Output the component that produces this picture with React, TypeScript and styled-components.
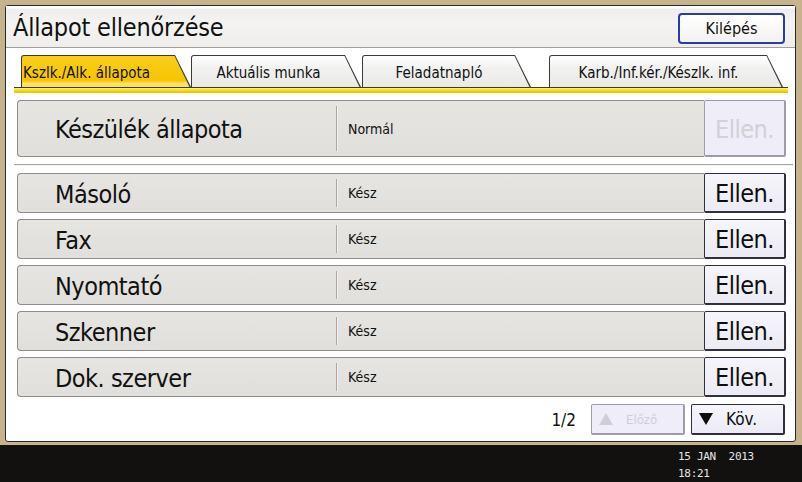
import React from "react";
import styled, { createGlobalStyle } from "styled-components";

const GlobalStyle = createGlobalStyle`
  body {
    margin: 0;
    background: #c6b28d;
    font-family: "Liberation Sans Narrow", "DejaVu Sans Condensed", "DejaVu Sans", sans-serif;
    color: #111;
  }
`;

const Device = styled.div`
  width: 802px;
  height: 482px;
  display: flex;
  flex-direction: column;
  background: #c6b28d;
  overflow: hidden;
`;

const Screen = styled.div`
  margin: 5px 6px 0 5px;
  height: 435px;
  border: 1px solid #2c2a26;
  border-radius: 3px;
  background: #ffffff;
  display: flex;
  flex-direction: column;
`;

const TitleBar = styled.div`
  height: 42px;
  flex-shrink: 0;
  box-sizing: border-box;
  padding: 2px 10px 0 7px;
  border-bottom: 1px solid #a09f9c;
  background: linear-gradient(#ffffff 0, #ffffff 2px, #efeeec 3px, #f4f3f1 40%, #efeeec 100%);
  display: flex;
  align-items: center;
  justify-content: space-between;
`;

const Title = styled.h1`
  margin: 0;
  font-size: 25px;
  font-weight: normal;
  letter-spacing: -0.2px;
`;

const ExitButton = styled.button`
  width: 107px;
  height: 31px;
  margin-top: 1px;
  border: 2px solid #2c3c9e;
  border-radius: 4px;
  background: linear-gradient(#ffffff, #f3f2f0);
  font-family: inherit;
  font-size: 16px;
  color: #111;
  padding: 0;
`;

const TabRow = styled.div`
  display: flex;
  align-items: flex-end;
  margin-top: 7px;
  padding-left: 15px;
  height: 32px;
`;

const Tab = styled.div<{ $width: number; $gapAfter: number }>`
  width: ${(p) => p.$width}px;
  height: 32px;
  margin-right: ${(p) => p.$gapAfter}px;
  box-sizing: border-box;
  padding: 1px 0 0 1px;
  background: #3a3a3a;
  border-top-left-radius: 3px;
  clip-path: polygon(0 0, calc(100% - 16px) 0, 100% 100%, 0 100%);
`;

const TabFace = styled.div<{ $active?: boolean }>`
  height: 100%;
  box-sizing: border-box;
  border-top-left-radius: 2px;
  clip-path: polygon(0 0, calc(100% - 16.5px) 0, calc(100% - 1.5px) 100%, 0 100%);
  background: ${(p) =>
    p.$active
      ? "linear-gradient(#f9cf1c 0, #f6c400 80%, #fde36c 88%, #fbe05a 100%)"
      : "linear-gradient(#ffffff 0, #f1f1ef 40%, #e9e9e7 100%)"};
  display: flex;
  align-items: center;
  justify-content: ${(p) => (p.$active ? "flex-start" : "center")};
  padding: ${(p) => (p.$active ? "2px 0 0 1px" : "2px 16px 0 0")};
  font-size: 15px;
  white-space: nowrap;
`;

const TabBar = styled.div`
  height: 5px;
  margin: 0 7px 0 8px;
  border-top: 1px solid #3a3a3a;
  background: linear-gradient(#fff27a 0, #f3dc1a 45%, #e3c300 100%);
`;

const Content = styled.div`
  display: flex;
  flex-direction: column;
  padding: 7px 9px 0 11px;
`;

const Row = styled.div<{ $tall?: boolean }>`
  display: flex;
  height: ${(p) => (p.$tall ? 57 : 40)}px;
  margin-bottom: 6px;
`;

const Panel = styled.div`
  flex: 1;
  display: flex;
  align-items: center;
  box-sizing: border-box;
  border: 1px solid #8e8d8a;
  border-right: none;
  border-radius: 4px 0 0 4px;
  background: linear-gradient(#e6e5e1, #e0dfdb);
`;

const Label = styled.div`
  width: 281px;
  padding: 2px 0 0 37px;
  font-size: 25px;
  letter-spacing: -0.5px;
  white-space: nowrap;
`;

const Divider = styled.div`
  align-self: stretch;
  width: 1px;
  margin: 5px 0;
  background: #a8a7a3;
  border-right: 1px solid #f3f2ef;
`;

const Status = styled.div`
  padding-left: 10px;
  font-size: 14px;
`;

const CheckButton = styled.button<{ $disabled?: boolean }>`
  width: 82px;
  height: 100%;
  padding: 2px 0 0;
  box-sizing: border-box;
  border: 1px solid ${(p) => (p.$disabled ? "#9d9ca8" : "#2f2f3d")};
  border-right-width: 2px;
  border-bottom-width: 2px;
  border-radius: 2px;
  background: ${(p) => (p.$disabled ? "#efedf7" : "linear-gradient(#f6f5fb, #ecebf5)")};
  color: ${(p) => (p.$disabled ? "#d2d1d6" : "#0e0e0e")};
  font-family: inherit;
  font-size: 25px;
  letter-spacing: -0.5px;
`;

const Separator = styled.div`
  height: 1px;
  margin: 1px -7px 7px -3px;
  background: #a5a4a1;
  border-bottom: 1px solid #f4f4f2;
`;

const Footer = styled.div`
  display: flex;
  align-items: center;
  justify-content: flex-end;
  margin-top: 1px;
  padding-right: 1px;
`;

const PageCount = styled.span`
  font-size: 17px;
  margin-right: 9px;
`;

const PageButton = styled.button<{ $disabled?: boolean }>`
  width: 94px;
  height: 31px;
  margin-left: 6px;
  padding: 0 0 0 6px;
  box-sizing: border-box;
  display: flex;
  align-items: center;
  gap: 12px;
  border: 1px solid ${(p) => (p.$disabled ? "#9d9ca8" : "#2f2f3d")};
  border-right-width: 2px;
  border-bottom-width: 2px;
  border-radius: 2px;
  background: ${(p) => (p.$disabled ? "#efedf7" : "linear-gradient(#f6f5fb, #ecebf5)")};
  color: ${(p) => (p.$disabled ? "#cfced4" : "#0e0e0e")};
  font-family: inherit;
  font-size: ${(p) => (p.$disabled ? 13 : 17)}px;
`;

const StatusStrip = styled.div`
  margin-top: 3px;
  flex: 1;
  background: #121110;
  color: #e6e6e6;
  font-family: "DejaVu Sans Mono", "Liberation Mono", monospace;
  font-size: 11px;
  line-height: 17px;
  letter-spacing: -0.3px;
  padding: 3px 0 0 678px;
  white-space: pre;
`;

const Triangle = ({ up, color }: { up?: boolean; color: string }) => (
  <svg width="16" height="14" viewBox="0 0 16 14">
    <polygon points={up ? "8,1 15,13 1,13" : "1,1 15,1 8,13"} fill={color} />
  </svg>
);

const tabs = [
  { label: "Kszlk./Alk. állapota", width: 170, gap: 0, active: true },
  { label: "Aktuális munka", width: 170, gap: 1 },
  { label: "Feladatnapló", width: 169, gap: 18 },
  { label: "Karb./Inf.kér./Készlk. inf.", width: 234, gap: 0 },
];

const functions = ["Másoló", "Fax", "Nyomtató", "Szkenner", "Dok. szerver"];

export default function App() {
  return (
    <Device>
      <GlobalStyle />
      <Screen>
        <TitleBar>
          <Title>Állapot ellenőrzése</Title>
          <ExitButton>Kilépés</ExitButton>
        </TitleBar>
        <TabRow>
          {tabs.map((t) => (
            <Tab key={t.label} $width={t.width} $gapAfter={t.gap}>
              <TabFace $active={t.active}>{t.label}</TabFace>
            </Tab>
          ))}
        </TabRow>
        <TabBar />
        <Content>
          <Row $tall>
            <Panel>
              <Label>Készülék állapota</Label>
              <Divider />
              <Status>Normál</Status>
            </Panel>
            <CheckButton $disabled>Ellen.</CheckButton>
          </Row>
          <Separator />
          {functions.map((name) => (
            <Row key={name}>
              <Panel>
                <Label>{name}</Label>
                <Divider />
                <Status>Kész</Status>
              </Panel>
              <CheckButton>Ellen.</CheckButton>
            </Row>
          ))}
          <Footer>
            <PageCount>1/2</PageCount>
            <PageButton $disabled>
              <Triangle up color="#cfced4" />
              Előző
            </PageButton>
            <PageButton>
              <Triangle color="#0e0e0e" />
              Köv.
            </PageButton>
          </Footer>
        </Content>
      </Screen>
      <StatusStrip>{"15 JAN  2013\n18:21"}</StatusStrip>
    </Device>
  );
}
